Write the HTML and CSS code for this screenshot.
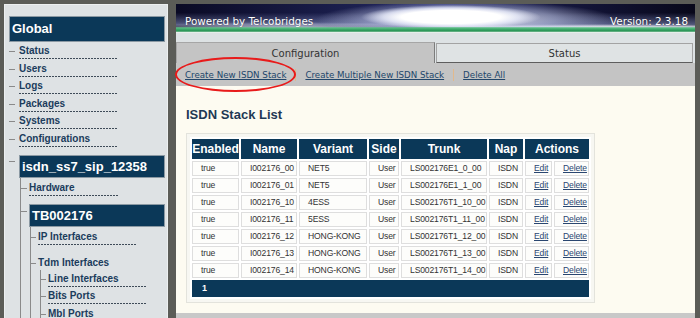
FILE: index.html
```html
<!DOCTYPE html>
<html>
<head>
<meta charset="utf-8">
<title>ISDN Stack List</title>
<link rel="stylesheet" href="styles.css">
</head>
<body>
<div class="page">
  <aside class="sidebar">
    <div class="box box-global">Global</div>
    <ul class="tree l1">
      <li class="item"><span class="label">Status</span></li>
      <li class="item"><span class="label">Users</span></li>
      <li class="item"><span class="label">Logs</span></li>
      <li class="item"><span class="label">Packages</span></li>
      <li class="item"><span class="label">Systems</span></li>
      <li class="item"><span class="label">Configurations</span></li>
      <li class="group">
        <div class="box box-node">isdn_ss7_sip_12358</div>
        <ul class="tree l2">
          <li class="item"><span class="label label-short">Hardware</span></li>
          <li class="group">
            <div class="box box-node">TB002176</div>
            <ul class="tree l3">
              <li class="item"><span class="label">IP Interfaces</span></li>
              <li class="item tdm"><span class="label nodots">Tdm Interfaces</span>
                <ul class="tree l4">
                  <li class="item"><span class="label">Line Interfaces</span></li>
                  <li class="item"><span class="label">Bits Ports</span></li>
                  <li class="item"><span class="label">Mbl Ports</span></li>
                </ul>
              </li>
            </ul>
          </li>
        </ul>
      </li>
    </ul>
  </aside>

  <main class="main">
    <header class="banner">
      <span>Powered by Telcobridges</span>
      <span>Version: 2.3.18</span>
    </header>
    <nav class="tabbar">
      <div class="tab tab-active">Configuration</div>
      <div class="tab tab-idle">Status</div>
    </nav>
    <div class="toolbar">
      <a class="tool-link" href="#">Create New ISDN Stack</a>
      <span class="sep"></span>
      <a class="tool-link" href="#">Create Multiple New ISDN Stack</a>
      <span class="sep"></span>
      <a class="tool-link" href="#">Delete All</a>
      <span class="highlight"></span>
    </div>
    <section class="content">
      <h2 class="title">ISDN Stack List</h2>
      <div class="list-box">
        <table class="grid">
          <colgroup>
            <col class="c-en"><col class="c-name"><col class="c-var"><col class="c-side">
            <col class="c-trunk"><col class="c-nap"><col class="c-edit"><col class="c-del">
          </colgroup>
          <thead>
            <tr><th>Enabled</th><th>Name</th><th>Variant</th><th>Side</th><th>Trunk</th><th>Nap</th><th colspan="2">Actions</th></tr>
          </thead>
          <tbody>
            <tr><td>true</td><td>I002176_00</td><td>NET5</td><td>User</td><td>LS002176E1_0_00</td><td>ISDN</td><td><a href="#">Edit</a></td><td><a href="#">Delete</a></td></tr>
            <tr><td>true</td><td>I002176_01</td><td>NET5</td><td>User</td><td>LS002176E1_1_00</td><td>ISDN</td><td><a href="#">Edit</a></td><td><a href="#">Delete</a></td></tr>
            <tr><td>true</td><td>I002176_10</td><td>4ESS</td><td>User</td><td>LS002176T1_10_00</td><td>ISDN</td><td><a href="#">Edit</a></td><td><a href="#">Delete</a></td></tr>
            <tr><td>true</td><td>I002176_11</td><td>5ESS</td><td>User</td><td>LS002176T1_11_00</td><td>ISDN</td><td><a href="#">Edit</a></td><td><a href="#">Delete</a></td></tr>
            <tr><td>true</td><td>I002176_12</td><td>HONG-KONG</td><td>User</td><td>LS002176T1_12_00</td><td>ISDN</td><td><a href="#">Edit</a></td><td><a href="#">Delete</a></td></tr>
            <tr><td>true</td><td>I002176_13</td><td>HONG-KONG</td><td>User</td><td>LS002176T1_13_00</td><td>ISDN</td><td><a href="#">Edit</a></td><td><a href="#">Delete</a></td></tr>
            <tr><td>true</td><td>I002176_14</td><td>HONG-KONG</td><td>User</td><td>LS002176T1_14_00</td><td>ISDN</td><td><a href="#">Edit</a></td><td><a href="#">Delete</a></td></tr>
          </tbody>
          <tfoot>
            <tr><td colspan="8" class="pager">1</td></tr>
          </tfoot>
        </table>
      </div>
    </section>
    <div class="bottom-strip"></div>
  </main>
</div>
</body>
</html>
```

FILE: styles.css
```css
* { box-sizing: border-box; }
html, body { margin: 0; padding: 0; overflow: hidden; }
body {
  background: #5b5c57;
  font-family: "Liberation Sans", Arial, sans-serif;
}
.page {
  display: flex;
  gap: 8px;
  height: 318px;
  padding: 4px 5px 0 4px;
  overflow: hidden;
}

/* ---------- sidebar ---------- */
.sidebar {
  width: 164px;
  flex: none;
  background: #dee2e4;
  border: 1px solid #eceff0;
  border-bottom: none;
  padding: 11px 2px 0 4px;
  overflow: hidden;
}
.box {
  background: #0b3858;
  border: 1px solid #8b99a3;
  color: #fff;
  font-weight: bold;
  font-size: 13px;
  padding-left: 2px;
  white-space: nowrap;
}
.box-global { height: 26px; line-height: 24px; }
.box-node { height: 23px; line-height: 21px; }

.tree { list-style: none; margin: 0; padding: 0; }
.tree li { position: relative; }
.tree li::before {
  content: "";
  position: absolute;
  left: 0;
  top: 9px;
  height: 1px;
  background: #8a8a8a;
}
.item { padding-bottom: 0.5px; }
.group { margin-top: 7.5px; }

.l1 > li { padding-left: 10px; }
.l1 > li::before { width: 6px; }
.l1 > li.group::before { top: 6px; }

.l2 { margin-left: 1px; border-left: 1px solid #8a8a8a; padding-top: 1px; }
.l2 > li { padding-left: 8px; }
.l2 > li::before { width: 6px; }
.l2 > li.group { margin-top: 8px; }
.l2 > li.group::before { top: 7px; }

.l3 { margin-left: 1px; border-left: 1px solid #8a8a8a; padding-top: 1px; }
.l3 > li { padding-left: 7px; }
.l3 > li::before { width: 5px; }
.l3 > li.tdm { margin-top: 8px; }

.l4 { margin-left: 2px; border-left: 1px solid #8a8a8a; }
.l4 > li { padding-left: 7px; }
.l4 > li::before { width: 5px; }

.label {
  display: block;
  width: 99px;
  height: 17px;
  padding-top: 1px;
  line-height: 16px;
  font-size: 10px;
  font-weight: bold;
  color: #1b3c5c;
  white-space: nowrap;
  background: linear-gradient(to right, #3e4b58 2px, transparent 2px) 0 100% / 3px 1px repeat-x;
}
.label-short { width: 89px; }
.label.nodots { background: none; height: 16px; }

/* ---------- main ---------- */
.main {
  flex: 1;
  min-width: 0;
  display: flex;
  flex-direction: column;
}
.banner {
  height: 29px;
  flex: none;
  display: flex;
  justify-content: space-between;
  align-items: center;
  padding: 4px 7px 0 9px;
  color: #fff;
  font-family: "DejaVu Sans", sans-serif;
  font-size: 10.4px;
  text-shadow: 0 0 1px rgba(0, 0, 0, 0.45);
  background:
    linear-gradient(to bottom, transparent 0, transparent 78%, #5cbf85 82%, #2f9c5c 90%, #2a9456 94%, #e6efea 97%),
    radial-gradient(90px 12px at 275px 13px, #ffffff 0%, #ffffff 55%, rgba(235, 238, 252, 0.8) 75%, rgba(255, 255, 255, 0) 100%),
    radial-gradient(150px 18px at 290px 15px, rgba(255, 255, 255, 0.85) 0%, rgba(210, 218, 245, 0.5) 60%, rgba(255, 255, 255, 0) 100%),
    radial-gradient(210px 4px at 430px 24px, #ffffff 0%, rgba(235, 240, 252, 0.75) 55%, rgba(255, 255, 255, 0) 100%),
    radial-gradient(170px 6px at 110px 24px, rgba(235, 240, 250, 0.8) 0%, rgba(255, 255, 255, 0) 100%),
    linear-gradient(to bottom, rgba(0, 0, 0, 0) 30%, rgba(140, 150, 200, 0.55) 70%, rgba(0, 0, 0, 0) 82%),
    linear-gradient(to right, #0a0a24 0%, #1c2050 35%, #2e3474 52%, #14163c 75%, #08081a 100%);
}
.tabbar {
  height: 30px;
  flex: none;
  display: flex;
  align-items: flex-end;
  background: #dde2e4;
  padding-right: 2px;
}
.tab {
  display: flex;
  align-items: center;
  justify-content: center;
  font-family: "DejaVu Sans", sans-serif;
  font-size: 10px;
  color: #333;
}
.tab-active {
  width: 259px;
  height: 21px;
  background: #c4c4c4;
  border: 1px solid #a6a6a6;
  border-right-color: #7c7c7c;
  border-bottom: none;
}
.tab-idle {
  flex: 1;
  height: 20px;
  margin-left: 1px;
  background: #dfe3e4;
  border: 1px solid #a3a3a3;
  border-bottom-color: #5e5e5e;
}
.toolbar {
  position: relative;
  height: 23px;
  flex: none;
  display: flex;
  align-items: center;
  gap: 9px;
  padding-left: 9px;
  background: #c4c4c4;
}
.tool-link {
  font-family: "DejaVu Sans", sans-serif;
  font-size: 8.7px;
  color: #22466a;
  text-decoration: underline;
}
.sep {
  width: 1px;
  height: 12px;
  background: #e2b98c;
}
.highlight {
  position: absolute;
  left: -1px;
  top: -6px;
  width: 121px;
  height: 35px;
  border: 2px solid #e81b1b;
  border-radius: 50%;
  pointer-events: none;
  z-index: 2;
}
.content {
  flex: 1;
  background: #fdfbf1;
  padding: 21px 10px 0;
}
.bottom-strip {
  height: 5px;
  flex: none;
  background: #c8c8c8;
}
.title {
  margin: 0;
  font-size: 13px;
  line-height: 16px;
  font-weight: bold;
  color: #1e3854;
}
.list-box {
  width: 409px;
  margin-top: 10px;
  border: 1px solid #e3e3dc;
  background: #f7f7f2;
  padding: 3px;
}
.grid {
  table-layout: fixed;
  width: 401px;
  border-collapse: separate;
  border-spacing: 2px;
  background: #fff;
}
.c-en { width: 47px; }
.c-name { width: 56px; }
.c-var { width: 68px; }
.c-side { width: 30px; }
.c-trunk { width: 86px; }
.c-nap { width: 34px; }
.c-edit { width: 27px; }
.c-del { width: 35px; }
.grid th {
  height: 20px;
  padding: 0;
  background: #0b3858;
  color: #fff;
  font-size: 12px;
  font-weight: bold;
  text-align: center;
  white-space: nowrap;
}
.grid td {
  height: 15px;
  padding: 0 0 0 8px;
  line-height: 13px;
  font-size: 8.6px;
  letter-spacing: -0.15px;
  color: #333;
  text-align: left;
  white-space: nowrap;
  background: #fdfdfb;
  border: 1px solid #dedede;
}
.grid td a { color: #2a4670; text-decoration: underline; }
.grid td.pager {
  height: 17px;
  background: #0b3858;
  border-color: #0b3858;
  color: #fff;
  font-weight: bold;
  font-size: 9px;
  padding-left: 9px;
}
```
